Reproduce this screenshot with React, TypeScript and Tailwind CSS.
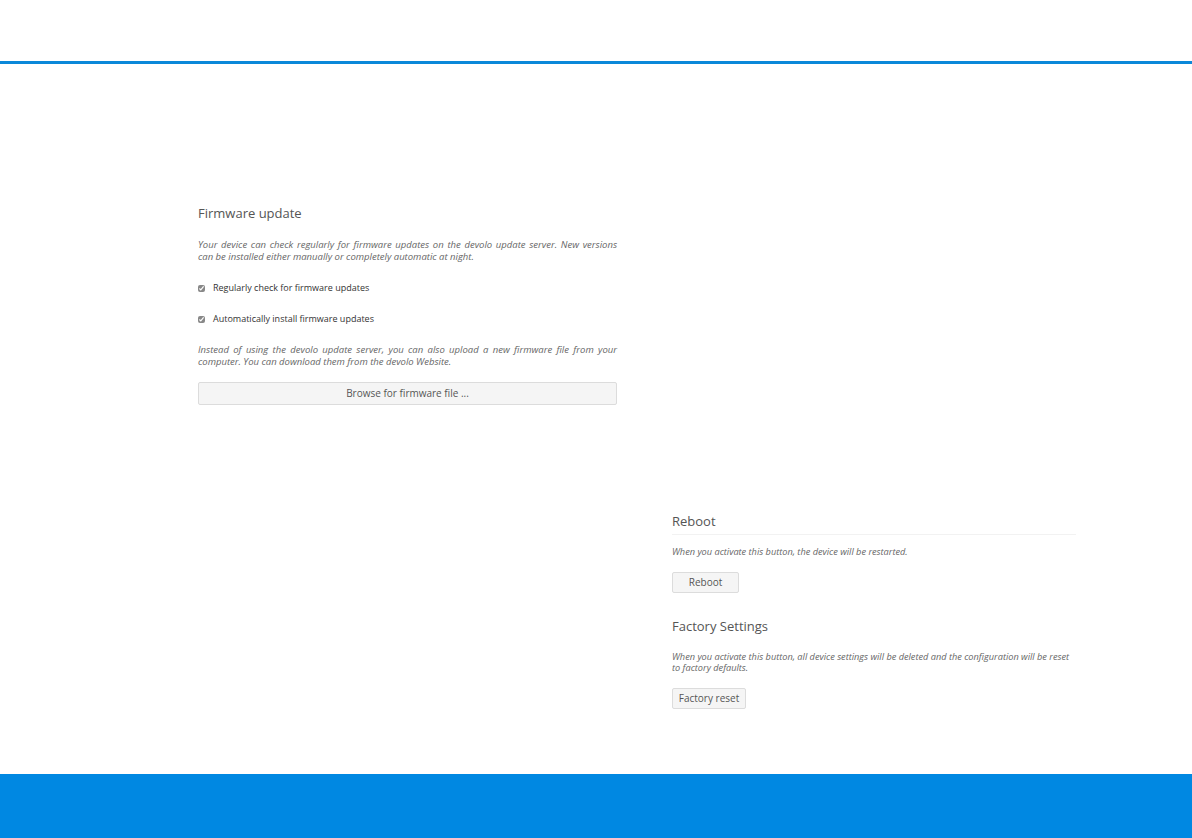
const font = { fontFamily: '"Open Sans", "Liberation Sans", sans-serif' };

function Check({ label }: { label: string }) {
  return (
    <label className="flex items-center gap-[8px] h-[12px] text-[9px] font-medium text-[#333]">
      <input type="checkbox" defaultChecked className="w-[7px] h-[7px] m-0 accent-[#888]" />
      {label}
    </label>
  );
}

export default function App() {
  return (
    <div className="w-[1192px] h-[838px] bg-white flex flex-col overflow-hidden" style={font}>
      <header className="h-[61px] shrink-0" />
      <div className="h-[3px] bg-[#0a88d9] shrink-0" />

      <main className="flex-1 flex pl-[198px] gap-[55px]">
        <section className="w-[419px] pt-[140px]">
          <h2 className="text-[13px] leading-[18px] text-[#555]">Firmware update</h2>
          <p className="mt-[17px] text-[9.5px] leading-[12px] italic text-[#666] text-justify">
            Your device can check regularly for firmware updates on the devolo update server. New versions
            can be installed either manually or completely automatic at night.
          </p>
          <div className="mt-[19px] flex flex-col gap-[19px]">
            <Check label="Regularly check for firmware updates" />
            <Check label="Automatically install firmware updates" />
          </div>
          <p className="mt-[19px] text-[9.5px] leading-[12px] italic text-[#666] text-justify">
            Instead of using the devolo update server, you can also upload a new firmware file from your
            computer. You can download them from the devolo Website.
          </p>
          <button className="mt-[14px] w-full h-[23px] bg-[#f5f5f5] border border-[#dcdcdc] rounded-[2px] text-[10px] text-[#555]">
            Browse for firmware file ...
          </button>
        </section>

        <section className="w-[404px] pt-[448px]">
          <h2 className="text-[13px] leading-[18px] text-[#555] pb-[4px] border-b border-[#f2f2f2]">
            Reboot
          </h2>
          <p className="mt-[11px] text-[9.2px] leading-[12px] italic text-[#666]">
            When you activate this button, the device will be restarted.
          </p>
          <button className="mt-[14px] w-[67px] h-[21px] bg-[#f5f5f5] border border-[#dcdcdc] rounded-[2px] text-[10px] text-[#555]">
            Reboot
          </button>

          <h2 className="mt-[24px] text-[13px] leading-[18px] text-[#555] pb-[5px]">
            Factory Settings
          </h2>
          <p className="mt-[11px] text-[9.2px] leading-[11px] italic text-[#666]">
            When you activate this button, all device settings will be deleted and the configuration will be reset
            <br />
            to factory defaults.
          </p>
          <button className="mt-[15px] w-[74px] h-[21px] bg-[#f5f5f5] border border-[#dcdcdc] rounded-[2px] text-[10px] text-[#555]">
            Factory reset
          </button>
        </section>
      </main>

      <footer className="h-[64px] shrink-0 bg-[#0088e2]" />
    </div>
  );
}
